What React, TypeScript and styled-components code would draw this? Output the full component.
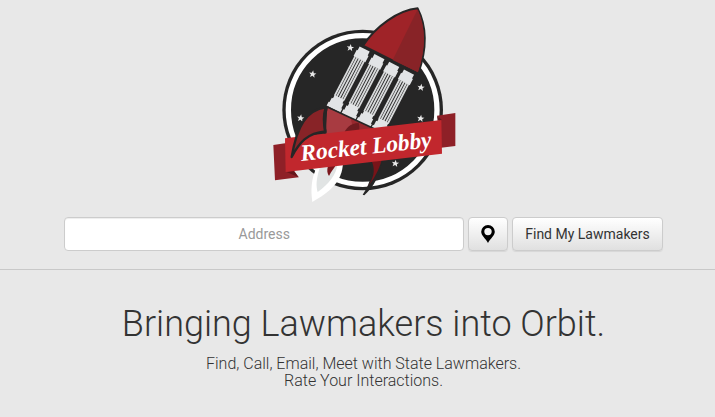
import React from "react";
import styled, { createGlobalStyle } from "styled-components";

const GlobalStyle = createGlobalStyle`
  body {
    margin: 0;
    background: #e8e8e8;
    color: #333;
    font-family: Roboto, "Helvetica Neue", sans-serif;
  }
  * { box-sizing: border-box; }
`;

const Hero = styled.header`
  display: flex;
  flex-direction: column;
  align-items: center;
  padding: 0 0 18px 12px;
  border-bottom: 1px solid #c8c8c8;
`;

const LogoArt = styled.svg`
  display: block;
  width: 200px;
  height: 210px;
`;

const SearchForm = styled.form`
  display: flex;
  justify-content: center;
  gap: 4px;
  width: 100%;
  margin-top: 7px;
`;

const AddressInput = styled.input`
  flex: 0 1 400px;
  min-width: 0;
  height: 34px;
  padding: 0 12px;
  border: 1px solid #ccc;
  border-radius: 4px;
  background: #fff;
  box-shadow: inset 0 1px 1px rgba(0, 0, 0, 0.075);
  color: #333;
  font: 400 14px/20px Roboto, sans-serif;
  text-align: center;
  &::placeholder { color: #999; opacity: 1; }
`;

const Button = styled.button`
  display: flex;
  align-items: center;
  justify-content: center;
  flex: none;
  min-width: 40px;
  height: 34px;
  padding: 0 12px;
  border: 1px solid #ccc;
  border-radius: 4px;
  background: linear-gradient(#fff, #e0e0e0);
  box-shadow: inset 0 1px 0 rgba(255, 255, 255, 0.15), 0 1px 1px rgba(0, 0, 0, 0.075);
  color: #333;
  font: 400 14px/20px Roboto, sans-serif;
  white-space: nowrap;
  cursor: pointer;
`;

const Pitch = styled.main`
  padding: 32px 0 24px 12px;
  text-align: center;
`;

const Headline = styled.h1`
  margin: 0 0 9px;
  font-size: 36px;
  font-weight: 300;
  line-height: 44px;
`;

const Tagline = styled.p`
  margin: 0;
  font-size: 16px;
  font-weight: 300;
  line-height: 17px;
`;

const STARS = [
  [255, 143], [142, 222], [106, 354], [467, 262], [466, 355], [390, 490],
];

const Column = ({ x }: { x: number }) => (
  <g transform={`translate(${x} 0)`}>
    <path d="M-17 0H17V13H20V34H-20V13H-17Z" fill="#e2e4e6" />
    <path d="M-15 32V166M-8 32V166M0 32V166M8 32V166M15 32V166" stroke="#d8dadb" strokeWidth="5.4" />
    <path d="M-16 164H16V175H20V190H23V203H-23V190H-20V175H-16Z" fill="#e2e4e6" />
  </g>
);

const Logo = () => (
  <LogoArt viewBox="-4 0 600 630" role="img" aria-label="Rocket Lobby">
    <circle cx="292" cy="330" r="241" fill="#262626" />
    <circle cx="292" cy="330" r="223" fill="none" stroke="#fff" strokeWidth="16" />
    {STARS.map(([x, y]) => (
      <path
        key={`${x}-${y}`}
        transform={`translate(${x} ${y}) rotate(8)`}
        d="M0-11 3-3 11-3 5 2 7 10 0 5-7 10-5 2-11-3-3-3Z"
        fill="#e8e8e8"
      />
    ))}

    <path d="M286 137 462 224 438 266 360 400 182 322Z" fill="#262626" />
    <path d="M457 25C398 31 332 78 293 137L459 220C485 146 485 80 457 25Z" fill="#9f2328" stroke="#262626" strokeWidth="6" strokeLinejoin="round" />
    <path d="M457 28 382 180 458 217C482 146 482 83 457 28Z" fill="#882327" />
    <g transform="translate(298 147) rotate(27.5)">
      <Column x={0} />
      <Column x={50} />
      <Column x={100} />
      <Column x={150} />
    </g>

    <path d="M186 320 326 388 320 420H180Z" fill="#a83b41" />
    <path d="M255 352 326 388 310 410H270Z" fill="#98282e" />
    <path d="M186 321 330 388" stroke="#262626" strokeWidth="5" />
    <path d="M280 369C256 370 240 383 232 410H276C283 394 284 380 280 369Z" fill="#701b20" />

    <path d="M155 500C137 535 136 570 141 606C191 577 231 548 233 487Z" fill="#fff" />
    <path d="M164 500C153 535 151 557 157 576C190 552 213 526 217 490Z" fill="#e1e4e4" />
    <path d="M188 498C184 511 186 521 191 528C198 512 208 505 215 490Z" fill="#7b171d" />
    <path d="M310 485C325 509 318 545 292 584L297 586C325 561 343 528 352 480Z" fill="#262626" />
    <path d="M320 485C331 513 324 536 306 561C326 538 340 512 349 480Z" fill="#781419" />

    <path d="M24 435 64 429 64 514 85 512 100 532 29 541Z" fill="#8e2027" />
    <path d="M62 515 86 512 100 532Z" fill="#66161b" />
    <path d="M515 347 570 339 570 438 527 443V360Z" fill="#8e2027" />
    <path d="M515 347 530 360 517 363Z" fill="#66161b" />
    <path d="M59 415 528 360 530 461 61 516Z" fill="#c1272d" />

    <path d="M181 322C124 330 95 376 79 471C101 429 126 398 180 394C174 368 174 345 181 322Z" fill="#882327" stroke="#262626" strokeWidth="7" strokeLinejoin="round" />
    <path d="M184 322C176 346 177 372 180 400" fill="none" stroke="#262626" strokeWidth="8" />
    <text
      transform="translate(108 483) rotate(-6)"
      fill="#fff"
      fontFamily="'Liberation Serif', serif"
      fontSize="70"
      fontWeight="700"
      fontStyle="italic"
    >
      Rocket Lobby
    </text>
  </LogoArt>
);

const PinIcon = () => (
  <svg width="14" height="18" viewBox="0 0 14 18" aria-hidden="true">
    <path
      fillRule="evenodd"
      d="M7 0a6.8 6.8 0 0 1 6.8 6.8C13.800 10.500 9.500 13.500 7 18 4.500 13.500.2 10.500.2 6.800A6.800 6.800 0 0 1 7 0ZM7 2.900a3.700 3.700 0 1 0 0 7.400 3.700 3.700 0 0 0 0-7.400Z"
      fill="#000"
    />
  </svg>
);

export default function App() {
  return (
    <>
      <GlobalStyle />
      <Hero>
        <Logo />
        <SearchForm onSubmit={(event) => event.preventDefault()}>
          <AddressInput type="text" placeholder="Address" aria-label="Address" />
          <Button type="button" aria-label="Use my location">
            <PinIcon />
          </Button>
          <Button type="submit">Find My Lawmakers</Button>
        </SearchForm>
      </Hero>
      <Pitch>
        <Headline>Bringing Lawmakers into Orbit.</Headline>
        <Tagline>
          Find, Call, Email, Meet with State Lawmakers.
          <br />
          Rate Your Interactions.
        </Tagline>
      </Pitch>
    </>
  );
}
